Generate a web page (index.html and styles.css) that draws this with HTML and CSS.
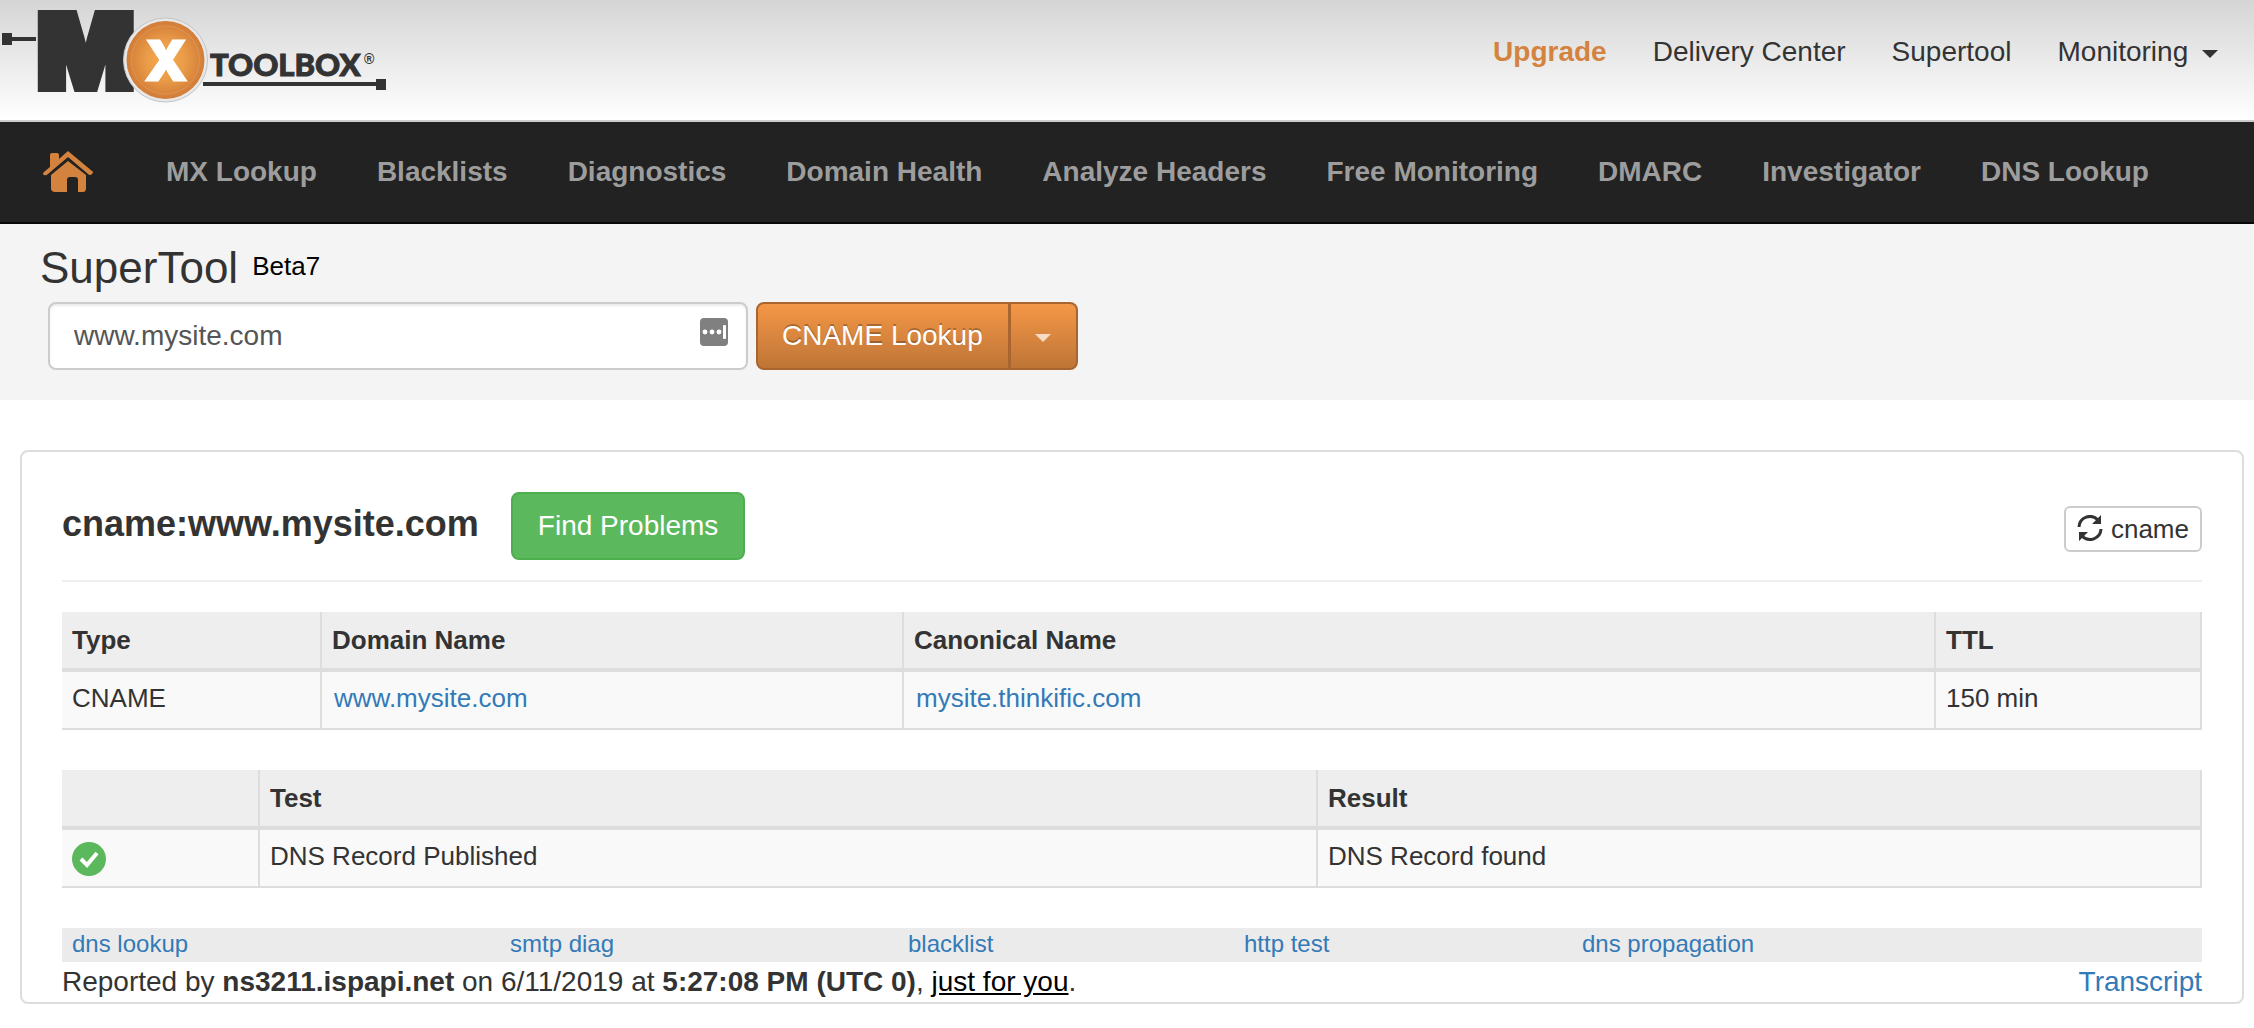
FILE: index.html
```
<!doctype html>
<html lang="en">
<head>
	<meta charset="utf-8">
	<title>SuperTool</title>
	<link rel="stylesheet" href="styles.css">
</head>
<body>
	<!-- Top bar -->
	<header class="topbar">
		<a class="logo" href="#">
			<svg width="390" height="108" viewBox="0 0 390 108">
				<defs>
					<radialGradient id="ball">
						<stop offset="0" stop-color="#f6ab4a"/>
						<stop offset="0.5" stop-color="#ea9c48"/>
						<stop offset="1" stop-color="#d27c38"/>
					</radialGradient>
				</defs>
				<g fill="#333">
					<rect x="2" y="33" width="10" height="12"/>
					<rect x="12" y="37" width="24" height="4"/>
					<text class="logo-m" x="37" y="88">M</text>
					<rect x="203" y="82" width="174" height="4"/>
					<rect x="376" y="79" width="10" height="11"/>
					<text class="logo-name" x="210" y="76">TOOLBOX</text>
					<text class="logo-reg" x="364" y="64">®</text>
				</g>
				<circle cx="165.500" cy="60" r="42" fill="#e8e8e8" stroke="#c4c4c4"/>
				<circle cx="165.500" cy="60" r="39" fill="url(#ball)"/>
				<circle cx="165.500" cy="60" r="34" fill="none" stroke="#df9550"/>
				<text class="logo-x" x="166" y="81">X</text>
			</svg>
		</a>
		<nav class="account">
			<a class="upgrade" href="#">Upgrade</a>
			<a href="#">Delivery Center</a>
			<a href="#">Supertool</a>
			<a href="#">Monitoring <span class="caret"></span></a>
		</nav>
	</header>

	<!-- Main menu -->
	<nav class="menu">
		<a class="home" href="#" aria-label="Home">
			<svg width="52" height="44" viewBox="0 0 52 44">
				<path fill="#d4833f" d="M26 1 L17 9 V5 Q17 3 15 3 H10 Q8 3 8 5 V17 L2 22 Q0 24 2 25 Q4 26 6 24 L26 7 L46 24 Q48 26 50 24 Q52 22 50 21 Z"/>
				<path fill="#d4833f" d="M26 11 L9 25 V38 Q9 42 13 42 H25 V30 Q25 27 28 27 H33 Q36 27 36 30 V42 H41 Q44 42 44 38 V25 Z"/>
			</svg>
		</a>
		<a href="#">MX Lookup</a>
		<a href="#">Blacklists</a>
		<a href="#">Diagnostics</a>
		<a href="#">Domain Health</a>
		<a href="#">Analyze Headers</a>
		<a href="#">Free Monitoring</a>
		<a href="#">DMARC</a>
		<a href="#">Investigator</a>
		<a href="#">DNS Lookup</a>
	</nav>

	<!-- Search -->
	<section class="search">
		<div class="title">
			<h1><label for="host">SuperTool</label></h1>
			<span class="beta">Beta7</span>
		</div>
		<form class="lookup">
			<div class="field">
				<input type="text" id="host" value="www.mysite.com">
				<svg class="filler" width="28" height="28" viewBox="0 0 28 28">
					<rect width="28" height="28" rx="4" fill="#808080"/>
					<g fill="#fff">
						<circle cx="5" cy="14" r="2.400"/>
						<circle cx="12" cy="14" r="2.400"/>
						<circle cx="19" cy="14" r="2.400"/>
						<rect x="23" y="7" width="3" height="14" rx="1"/>
					</g>
				</svg>
			</div>
			<div class="split">
				<button type="button" class="orange">CNAME Lookup</button>
				<button type="button" class="orange toggle" aria-label="More lookups"><span class="caret"></span></button>
			</div>
		</form>
	</section>

	<!-- Result -->
	<main class="panel">
		<div class="panel-head">
			<h2>cname:www.mysite.com</h2>
			<button type="button" class="green">Find Problems</button>
			<button type="button" class="refresh">
				<svg width="26" height="28" viewBox="0 0 26 28">
					<g fill="none" stroke="#333" stroke-width="3">
						<path d="M2 12 A11 11 0 0 1 21 5"/>
						<path d="M24 14 A11 11 0 0 1 5 21"/>
					</g>
					<path fill="#333" d="M24 0 V9 H15 Z M2 26 V17 H11 Z"/>
				</svg>
				cname
			</button>
		</div>

		<table class="records">
			<thead>
				<tr>
					<th class="type">Type</th>
					<th class="domain">Domain Name</th>
					<th>Canonical Name</th>
					<th class="ttl">TTL</th>
				</tr>
			</thead>
			<tbody>
				<tr>
					<td>CNAME</td>
					<td><a href="#">www.mysite.com</a></td>
					<td><a href="#">mysite.thinkific.com</a></td>
					<td>150 min</td>
				</tr>
			</tbody>
		</table>

		<table class="records">
			<thead>
				<tr>
					<th class="status"></th>
					<th class="test">Test</th>
					<th>Result</th>
				</tr>
			</thead>
			<tbody>
				<tr>
					<td>
						<svg class="ok" width="34" height="34" viewBox="0 0 34 34">
							<circle cx="17" cy="17" r="17" fill="#5cb85c"/>
							<path d="M9 17 L15 23 L25 11" fill="none" stroke="#fff" stroke-width="4"/>
						</svg>
					</td>
					<td>DNS Record Published</td>
					<td>DNS Record found</td>
				</tr>
			</tbody>
		</table>

		<div class="tools">
			<a href="#">dns lookup</a>
			<a href="#">smtp diag</a>
			<a href="#">blacklist</a>
			<a href="#">http test</a>
			<a href="#">dns propagation</a>
		</div>
		<div class="report">
			<span>Reported by <b>ns3211.ispapi.net</b> on 6/11/2019 at <b>5:27:08 PM (UTC 0)</b>, <a class="you" href="#">just for you</a>.</span>
			<a href="#">Transcript</a>
		</div>
	</main>
</body>
</html>
```
FILE: styles.css
```
* {
	box-sizing: border-box;
}
body {
	margin: 0;
	background-color: #fff;
	color: #333;
	font-family: "Liberation Sans", Arial, sans-serif;
	font-size: 28px;
	line-height: 40px;
}
a {
	color: #337ab7;
	text-decoration: none;
}
h1, h2 {
	margin: 0;
}
button, input {
	font-family: inherit;
	font-size: 28px;
}
button {
	cursor: pointer;
}
.caret {
	display: inline-block;
	border: 8px solid transparent;
	border-top-color: currentColor;
	border-bottom: 0;
	vertical-align: middle;
}

/* top bar */
.topbar {
	display: flex;
	justify-content: space-between;
	height: 122px;
	padding-right: 36px;
	background: linear-gradient(#d5d5d5, #fff);
	border-bottom: 2px solid #ccc;
}
.logo svg {
	display: block;
}
.logo-m {
	font: 900 102px Inter, sans-serif;
	stroke: #333;
	stroke-width: 8px;
}
.logo-x {
	font: 900 56px Inter, sans-serif;
	fill: #fff;
	stroke: #fff;
	stroke-width: 1px;
	text-anchor: middle;
}
.logo-name {
	font: 900 31px Lato, sans-serif;
	stroke: #333;
	stroke-width: 1px;
}
.logo-reg {
	font: bold 14px "Liberation Sans", sans-serif;
}
.account {
	display: flex;
	gap: 46px;
	padding-top: 32px;
}
.account a {
	color: #333;
}
.account .caret {
	margin-left: 6px;
}
.account .upgrade {
	color: #d4833f;
	font-weight: bold;
}

/* menu */
.menu {
	display: flex;
	align-items: center;
	gap: 60px;
	height: 102px;
	padding-left: 42px;
	background-color: #222;
	border-bottom: 2px solid #080808;
}
.menu a {
	color: #9d9d9d;
	font-weight: bold;
}
.menu .home {
	margin-right: 12px;
}
.home svg {
	display: block;
}

/* search */
.search {
	padding: 22px 40px 30px;
	background-color: #f4f4f4;
}
.title {
	display: flex;
	gap: 14px;
	line-height: 44px;
}
.title h1 {
	font-size: 44px;
	font-weight: normal;
}
.beta {
	color: #000;
	font-size: 26px;
	line-height: 40px;
}
.lookup {
	display: flex;
	gap: 8px;
	padding: 12px 8px 0;
}
.field {
	position: relative;
	flex: 0 1 700px;
}
.field input {
	width: 100%;
	height: 68px;
	padding: 0 60px 0 24px;
	color: #555;
	background-color: #fff;
	border: 2px solid #ccc;
	border-radius: 8px;
	box-shadow: inset 0 2px 2px rgba(0, 0, 0, 0.08);
}
.filler {
	position: absolute;
	top: 16px;
	right: 20px;
}
.split {
	display: flex;
}
.orange {
	height: 68px;
	padding: 0 25px 0 24px;
	color: #fff;
	background: linear-gradient(#f49747, #be7536);
	border: 2px solid #a9652f;
	border-radius: 8px 0 0 8px;
	text-shadow: 0 -2px 0 rgba(0, 0, 0, 0.25);
}
.orange.toggle {
	width: 68px;
	padding: 0;
	border-left-width: 1px;
	border-radius: 0 8px 8px 0;
}
.toggle .caret {
	color: #f6dcc6;
}

/* result panel */
.panel {
	margin: 50px 10px 24px 20px;
	padding: 40px;
	padding-bottom: 0;
	border: 2px solid #ddd;
	border-radius: 8px;
}
.panel-head {
	display: flex;
	align-items: center;
	gap: 32px;
	padding-bottom: 20px;
	border-bottom: 2px solid #eee;
}
.panel-head h2 {
	padding-bottom: 4px;
	font-size: 36px;
}
.green {
	height: 68px;
	padding: 0 25px;
	color: #fff;
	background-color: #5cb85c;
	border: 2px solid #4cae4c;
	border-radius: 8px;
}
.refresh {
	display: flex;
	align-items: center;
	gap: 8px;
	height: 46px;
	margin-top: 6px;
	margin-left: auto;
	padding: 0 11px;
	color: #333;
	background-color: #fff;
	border: 2px solid #ccc;
	border-radius: 6px;
	font-size: 26px;
}
.records {
	width: 100%;
	margin-top: 30px;
	border-spacing: 0;
	table-layout: fixed;
	font-size: 26px;
	line-height: 36px;
}
.records + .records {
	margin-top: 40px;
}
.records th, .records td {
	padding: 10px;
	text-align: left;
	vertical-align: top;
	border-right: 2px solid #ddd;
	border-bottom: 2px solid #ddd;
}
.records th {
	height: 60px;
	background-color: #eee;
	border-bottom-width: 4px;
}
.records td {
	height: 58px;
	padding-top: 8px;
	background-color: #f9f9f9;
}
.records a {
	padding-left: 2px;
}
.type {
	width: 260px;
}
.domain {
	width: 582px;
}
.ttl {
	width: 266px;
}
.status {
	width: 198px;
}
.test {
	width: 1058px;
}
.ok {
	display: block;
	margin-top: 4px;
}
.tools {
	display: grid;
	grid-template-columns: 438fr 398fr 336fr 338fr 620fr;
	margin-top: 40px;
	padding: 0 0 2px 10px;
	background-color: #ebebeb;
	font-size: 24px;
	line-height: 32px;
}
.report {
	display: flex;
	justify-content: space-between;
}
.you {
	color: #000;
	text-decoration: underline;
}
```
